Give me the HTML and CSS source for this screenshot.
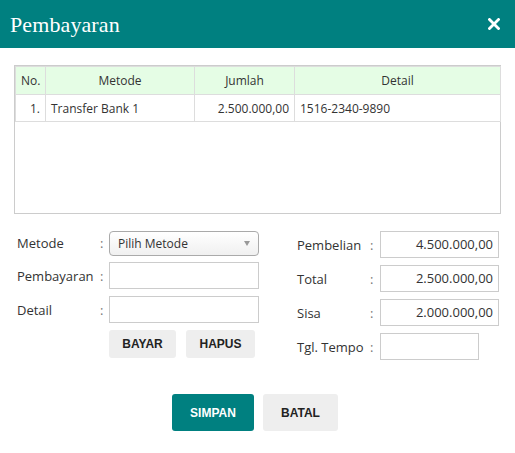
FILE: index.html
```html
<!DOCTYPE html>
<html>
<head>
<meta charset="utf-8">
<link rel="stylesheet" href="styles.css">
</head>
<body>
<div class="modal">
  <div class="header">
    <h1 class="title">Pembayaran</h1>
    <svg class="close" width="12" height="12" viewBox="0 0 12 12"><path d="M1.5 1.5 L10.5 10.5 M10.5 1.5 L1.5 10.5" stroke="#fff" stroke-width="2.8" stroke-linecap="square"/></svg>
  </div>
  <div class="content">
    <div class="table-box">
      <table class="grid">
        <colgroup><col class="c-no"><col class="c-metode"><col class="c-jumlah"><col class="c-detail"></colgroup>
        <thead>
          <tr><th>No.</th><th>Metode</th><th>Jumlah</th><th>Detail</th></tr>
        </thead>
        <tbody>
          <tr><td class="num">1.</td><td>Transfer Bank 1</td><td class="num">2.500.000,00</td><td>1516-2340-9890</td></tr>
        </tbody>
      </table>
    </div>
    <div class="form">
      <div class="col-left">
        <div class="row">
          <span class="label">Metode</span><span class="colon">:</span>
          <div class="select"><span>Pilih Metode</span><span class="arrow"></span></div>
        </div>
        <div class="row">
          <span class="label">Pembayaran</span><span class="colon">:</span>
          <div class="input"></div>
        </div>
        <div class="row">
          <span class="label">Detail</span><span class="colon">:</span>
          <div class="input"></div>
        </div>
        <div class="row">
          <span class="label"></span><span class="colon"></span>
          <div class="btns"><button class="btn">BAYAR</button><button class="btn">HAPUS</button></div>
        </div>
      </div>
      <div class="col-right">
        <div class="row">
          <span class="label">Pembelian</span><span class="colon">:</span>
          <div class="input val">4.500.000,00</div>
        </div>
        <div class="row">
          <span class="label">Total</span><span class="colon">:</span>
          <div class="input val">2.500.000,00</div>
        </div>
        <div class="row">
          <span class="label">Sisa</span><span class="colon">:</span>
          <div class="input val">2.000.000,00</div>
        </div>
        <div class="row">
          <span class="label">Tgl. Tempo</span><span class="colon">:</span>
          <div class="input short"></div>
        </div>
      </div>
    </div>
    <div class="actions">
      <button class="btn primary">SIMPAN</button>
      <button class="btn big">BATAL</button>
    </div>
  </div>
</div>
</body>
</html>
```

FILE: styles.css
```css
* { box-sizing: border-box; }
html, body { margin: 0; padding: 0; background: #fff; }
body {
  font-family: "Open Sans", "DejaVu Sans", sans-serif;
  font-size: 13px;
  color: #333;
  width: 515px;
  height: 453px;
  overflow: hidden;
}
.header {
  height: 48px;
  background: #008080;
  display: flex;
  align-items: center;
  justify-content: space-between;
  padding: 0 15px 0 10px;
}
.title {
  margin: 0;
  font-family: "Liberation Serif", "DejaVu Serif", serif;
  font-weight: normal;
  font-size: 22px;
  color: #fff;
  letter-spacing: 0.1px;
  padding-top: 2px;
}
.close { display: block; }
.content { padding: 17px 14px 0 14px; }
.table-box {
  width: 487px;
  height: 149px;
  border: 1px solid #ccc;
}
.grid {
  border-collapse: collapse;
  width: 485px;
  font-size: 12px;
  table-layout: fixed;
}
.grid col.c-no { width: 30px; }
.grid col.c-metode { width: 149px; }
.grid col.c-jumlah { width: 100px; }
.grid col.c-detail { width: 206px; }
.grid th, .grid td {
  border: 1px solid #ddd;
  padding: 0 5px;
  white-space: nowrap;
}
.grid th {
  background: #e5fde5;
  font-weight: normal;
  height: 28px;
  text-align: center;
}
.grid td { height: 27px; }
.grid td.num { text-align: right; }
.form {
  display: flex;
  margin-top: 17px;
  padding-left: 3px;
}
.col-left {
  display: flex;
  flex-direction: column;
  gap: 7px;
  width: 280px;
}
.col-right {
  display: flex;
  flex-direction: column;
  gap: 7px;
}
.row { display: flex; align-items: center; }
.col-left .label { width: 83px; }
.col-left .colon { width: 9px; color: #777; }
.col-right .label { width: 73px; }
.col-right .colon { width: 10px; color: #777; }
.select {
  width: 150px;
  height: 25px;
  margin-bottom: -1px;
  border: 1px solid #aaa;
  border-radius: 4px;
  background: linear-gradient(#fff, #f0f0f0);
  display: flex;
  align-items: center;
  justify-content: space-between;
  padding: 0 8px 0 8px;
  font-size: 12px;
}
.arrow {
  width: 0; height: 0;
  border-left: 3.5px solid transparent;
  border-right: 3.5px solid transparent;
  border-top: 5px solid #999;
}
.input {
  width: 150px;
  height: 27px;
  border: 1px solid #ccc;
  background: #fff;
}
.col-right .input { width: 119px; }
.col-right .input.short { width: 99px; }
.input.val {
  text-align: right;
  line-height: 25px;
  padding-right: 5px;
}
.btns { display: flex; gap: 10px; }
.btn {
  font-family: "Liberation Sans", Arial, sans-serif;
  font-weight: bold;
  font-size: 12px;
  color: #222;
  background: #eee;
  border: none;
  border-radius: 3px;
  height: 28px;
  padding: 0;
  width: 67px;
}
.btns .btn + .btn { width: 69px; }
.actions {
  display: flex;
  justify-content: center;
  gap: 9px;
  margin-top: 34px;
  padding-right: 5px;
}
.btn.primary {
  background: #008080;
  color: #fff;
  width: 82px;
  height: 37px;
}
.btn.big { width: 75px; height: 37px; }
```
